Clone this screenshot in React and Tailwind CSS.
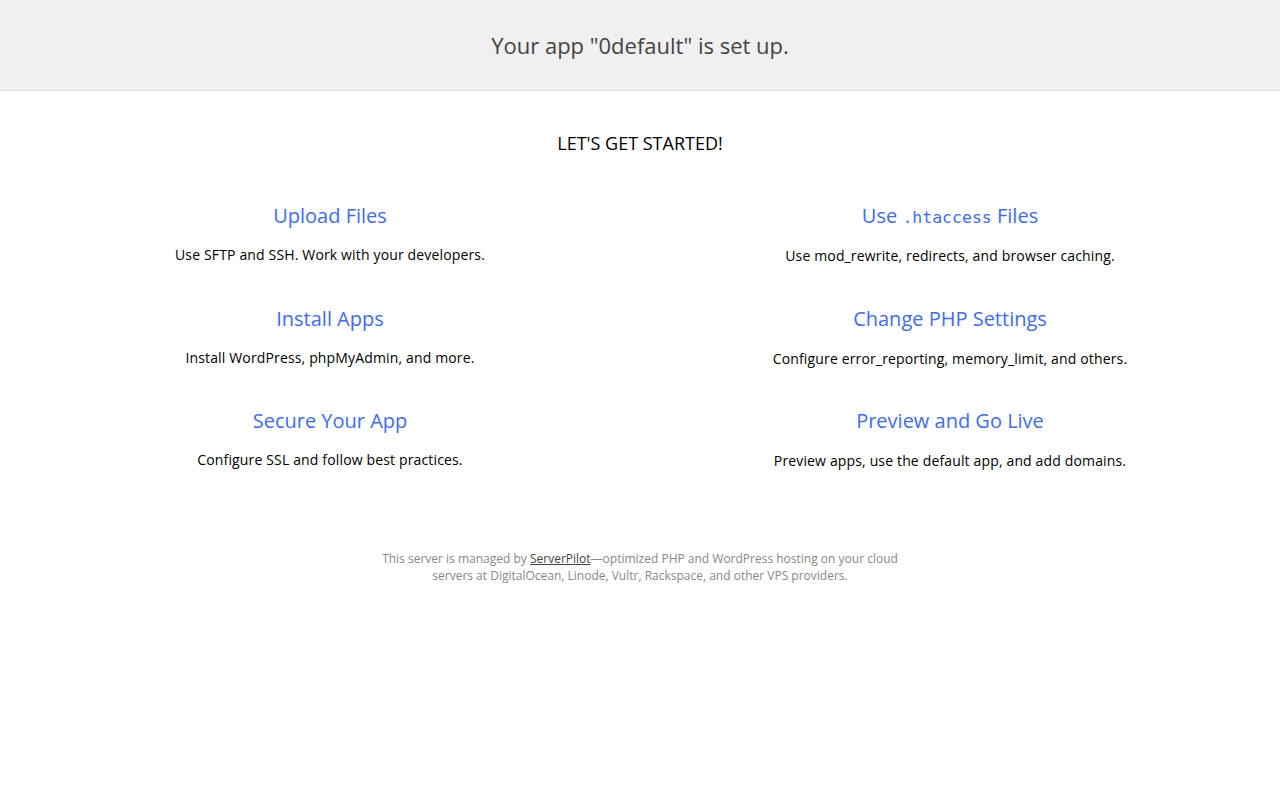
const items = [
  [
    { title: "Upload Files", desc: "Use SFTP and SSH. Work with your developers." },
    { title: "Install Apps", desc: "Install WordPress, phpMyAdmin, and more." },
    { title: "Secure Your App", desc: "Configure SSL and follow best practices." },
  ],
  [
    { title: "htaccess", desc: "Use mod_rewrite, redirects, and browser caching." },
    { title: "Change PHP Settings", desc: "Configure error_reporting, memory_limit, and others." },
    { title: "Preview and Go Live", desc: "Preview apps, use the default app, and add domains." },
  ],
];

const Item = ({ title, desc, right }) => (
  <div className={`${right ? "mb-[38.5px]" : "mb-[39.5px]"} text-center`}>
    <h3 className="h-[28px] text-[20px] leading-[28px] text-[#3e6bff]">
      {title === "htaccess" ? (
        <>
          Use <code className="font-['DejaVu_Sans_Mono',monospace] text-[16.5px] leading-none">.htaccess</code> Files
        </>
      ) : (
        title
      )}
    </h3>
    <p className={`${right ? "mt-[16px]" : "mt-[15px]"} text-[14px] leading-[20px] tracking-[0.15px] text-black`}>
      {desc}
    </p>
  </div>
);

const App = () => {
  return (
    <div className="min-h-screen bg-white font-['Open_Sans',sans-serif]">
      <div className="flex h-[91px] items-center justify-center border-b border-[#dcdcdc] bg-[#f0f0f0]">
        <h1 className="text-[22px] text-[#444]">Your app "0default" is set up.</h1>
      </div>
      <h2 className="mt-[40px] text-center text-[18px] leading-[25px] text-black">LET'S GET STARTED!</h2>
      <div className="mt-[46px] grid grid-cols-2 px-[20px]">
        {items.map((col, i) => (
          <div key={i}>
            {col.map((it) => (
              <Item key={it.title} {...it} right={i === 1} />
            ))}
          </div>
        ))}
      </div>
      <p className="mx-auto mt-[40px] max-w-[530px] text-center text-[12px] leading-[17px] text-[#888]">
        This server is managed by{" "}
        <a href="#" className="text-[#444] underline">ServerPilot</a>—optimized PHP and WordPress hosting on your cloud
        servers at DigitalOcean, Linode, Vultr, Rackspace, and other VPS providers.
      </p>
    </div>
  );
};

export default App;
